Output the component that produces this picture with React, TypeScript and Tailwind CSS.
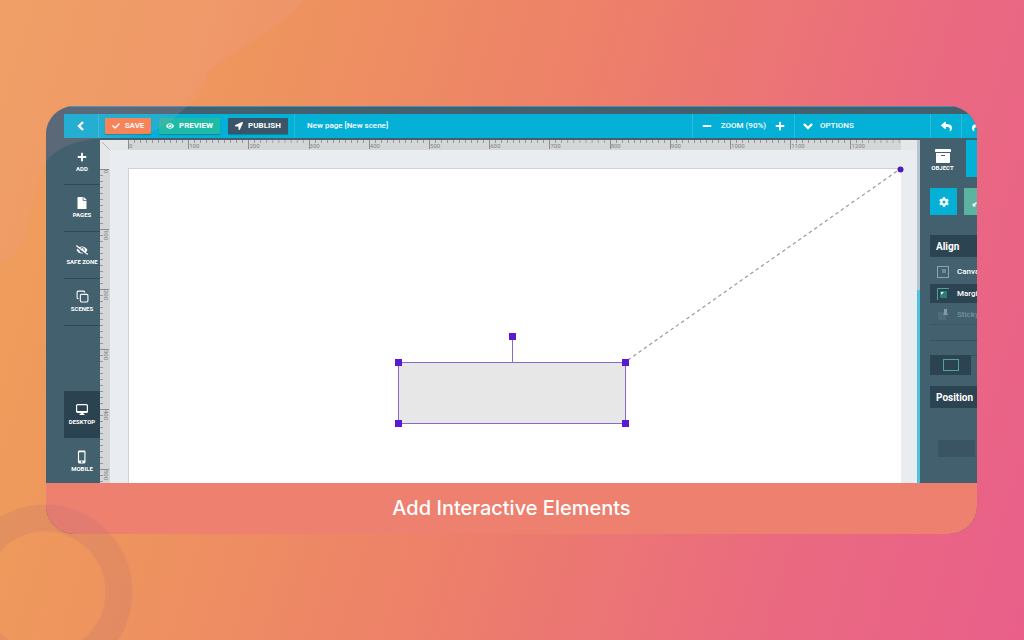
import type { ReactNode } from "react";
import { Copy } from "lucide-react";
import {
  FaArchive,
  FaCheck,
  FaCog,
  FaExpandAlt,
  FaEye,
  FaEyeSlash,
  FaFile,
  FaLocationArrow,
  FaMinus,
  FaPlus,
  FaReply,
  FaShare,
} from "react-icons/fa";
import { MdPhoneIphone } from "react-icons/md";
import clsx from "clsx";

const topMarks = [0, 100, 200, 300, 400, 500, 600, 700, 800, 900, 1000, 1100, 1200];
const sideMarks = [0, 100, 200, 300, 400, 500];

const tools = [
  { label: "ADD", icon: <FaPlus className="size-[10px]" /> },
  { label: "PAGES", icon: <FaFile className="size-3" /> },
  { label: "SAFE ZONE", icon: <FaEyeSlash className="size-3" /> },
  { label: "SCENES", icon: <Copy className="size-[13px]" strokeWidth={2} /> },
];

const Backdrop = () => (
  <svg
    className="pointer-events-none absolute inset-0 h-full w-full"
    aria-hidden="true"
  >
    <path
      d="M0 0H303C290 20 250 40 207 72C204 90 196 98 185 108C170 122 160 136 110 138C85 138 62 144 47 160C32 190 32 222 22 244C16 256 8 260 0 262Z"
      fill="#f4a0b8"
      fillOpacity="0.13"
    />
    <circle cx="45" cy="592" r="74" fill="none" stroke="#a8607a" strokeOpacity="0.15" strokeWidth="27" />
  </svg>
);

const Chevron = ({ d }: { d: string }) => (
  <svg className="size-[10px]" viewBox="0 0 10 10" fill="none" stroke="currentColor" strokeWidth="2.4" aria-hidden="true">
    <path d={d} />
  </svg>
);

const MonitorIcon = () => (
  <svg className="size-3" viewBox="0 0 12 12" fill="none" aria-hidden="true">
    <rect x="0.6" y="0.6" width="10.8" height="7.8" rx="1" stroke="white" strokeWidth="1.2" />
    <path d="M1 7H11V8.6H1ZM4.5 9H7.5V10H8.5V11H3.5V10H4.5Z" fill="white" />
  </svg>
);

const Divider = () => <span className="w-px self-stretch bg-white/15" />;

const ToolButton = ({
  label,
  icon,
  className,
}: {
  label: string;
  icon: ReactNode;
  className?: string;
}) => (
  <button
    className={clsx(
      "flex flex-col items-center justify-center gap-[2px] text-[6px] leading-[7px] font-bold whitespace-nowrap text-white",
      className
    )}
  >
    <span className="flex h-3 items-center">{icon}</span>
    {label}
  </button>
);

const ActionButton = ({
  label,
  icon,
  className,
}: {
  label: string;
  icon: ReactNode;
  className: string;
}) => (
  <button
    className={clsx(
      "flex h-4 items-center justify-center gap-[5px] rounded-[1px] text-[8px] leading-none font-bold shadow-[0_1px_1px_#00000040]",
      className
    )}
  >
    {icon}
    {label}
  </button>
);

const Toolbar = () => (
  <header className="ml-[18px] flex h-6 items-center overflow-hidden bg-[#04b0d6] text-[8px] leading-none font-medium whitespace-nowrap text-white">
    <button className="flex h-full w-[34px] shrink-0 items-center justify-center" aria-label="Back">
      <Chevron d="M7 1L3 5L7 9" />
    </button>
    <Divider />
    <div className="flex shrink-0 gap-2 px-[6px]">
      <ActionButton label="SAVE" icon={<FaCheck className="size-2" />} className="w-[46px] bg-[#f5804a]" />
      <ActionButton label="PREVIEW" icon={<FaEye className="size-2" />} className="w-[61px] bg-[#1fbba6]" />
      <ActionButton label="PUBLISH" icon={<FaLocationArrow className="size-2" />} className="w-[60px] bg-[#3a5568]" />
    </div>
    <Divider />
    <span className="grow pl-3">New page [New scene]</span>
    <Divider />
    <div className="flex w-[101px] shrink-0 items-center justify-between px-[9px]">
      <button aria-label="Zoom out">
        <FaMinus className="size-[10px]" />
      </button>
      <span>ZOOM (90%)</span>
      <button aria-label="Zoom in">
        <FaPlus className="size-[10px]" />
      </button>
    </div>
    <Divider />
    <button className="flex w-[135px] shrink-0 items-center gap-[7px] pl-2">
      <Chevron d="M1 3L5 7L9 3" />
      OPTIONS
    </button>
    <Divider />
    <button className="flex w-[30px] shrink-0 justify-center" aria-label="Undo">
      <FaReply className="size-[11px]" />
    </button>
    <Divider />
    <button className="flex w-[15px] shrink-0 pl-[10px]" aria-label="Redo">
      <FaShare className="size-[11px] shrink-0" />
    </button>
  </header>
);

const Sidebar = () => (
  <nav className="flex w-[54px] shrink-0 flex-col pl-[18px]" aria-label="Tools">
    {tools.map((tool) => (
      <ToolButton
        key={tool.label}
        label={tool.label}
        icon={tool.icon}
        className={clsx("border-b border-[#2f4a59] pb-[2px]", tool.label === "ADD" ? "h-[45px]" : "h-[47px]")}
      />
    ))}
    <div className="mt-auto flex flex-col">
      <ToolButton label="DESKTOP" icon={<MonitorIcon />} className="h-[47px] bg-[#2b4351]" />
      <ToolButton label="MOBILE" icon={<MdPhoneIphone className="size-[14px]" />} className="h-[45px] pt-[2px]" />
    </div>
  </nav>
);

const TopRuler = () => (
  <div className="flex h-[10px] bg-[#e6e7e9] pr-4">
    <div className="w-7 shrink-0">
      <svg className="h-[10px] w-[10px]" viewBox="0 0 10 10" aria-hidden="true">
        <path d="M2 2L10 10" stroke="#a5a8ab" strokeWidth="0.8" />
      </svg>
    </div>
    <div className="flex grow overflow-hidden bg-[#d5d6d7]">
      {topMarks.map((mark) => (
        <div
          key={mark}
          className="w-[7.79%] shrink-0 bg-[linear-gradient(90deg,#96999b_1px,transparent_1px)] bg-[length:10%_3px] bg-repeat-x"
        >
          <div className="h-[9px] border-l border-[#8b8e90] pt-[3px] text-[6px] leading-[6px] text-[#808385]">
            {mark}
          </div>
        </div>
      ))}
    </div>
  </div>
);

const SideRuler = () => (
  <div className="relative w-[10px] shrink-0 bg-[#e6e7e9]">
    <div className="absolute inset-x-0 top-[19px] bottom-0 overflow-hidden bg-[#d5d6d7]">
      {sideMarks.map((mark) => (
        <div
          key={mark}
          className="h-[60px] bg-[linear-gradient(180deg,#96999b_1px,transparent_1px)] bg-[length:3px_10%] bg-repeat-y"
        >
          <div className="w-[9px] border-t border-[#8b8e90] pl-[3px] text-[6px] leading-[6px] text-[#808385] [writing-mode:vertical-rl]">
            {mark}
          </div>
        </div>
      ))}
    </div>
  </div>
);

const handles = [
  [270, 194],
  [497, 194],
  [270, 255],
  [497, 255],
  [384, 168],
];

const Artboard = () => (
  <svg
    className="block h-auto w-full overflow-visible border-t border-l border-[#d0d2d5] bg-white"
    viewBox="1 1 772 314"
    role="img"
    aria-label="Scene with a selected rectangle"
  >
    <path d="M500 192L772 1" stroke="#9a9a9a" strokeWidth="1.2" strokeDasharray="3.5 3" />
    <rect x="270.5" y="194.5" width="227" height="61" fill="#e7e7e7" stroke="#8a68c8" />
    <path d="M384.5 168V194" stroke="#8a68c8" />
    {handles.map(([x, y]) => (
      <rect key={`${x}-${y}`} x={x - 3} y={y - 3} width="7" height="7" fill="#5a1ad2" />
    ))}
    <circle cx="772.5" cy="1.5" r="3" fill="#4d1bb8" />
  </svg>
);

const Workspace = () => (
  <main className="flex min-w-0 grow flex-col bg-[#e9ecf1]">
    <TopRuler />
    <div className="flex grow">
      <SideRuler />
      <div className="grow overflow-hidden pt-[18px] pr-4 pl-[18px]">
        <Artboard />
      </div>
    </div>
  </main>
);

const PanelHeading = ({ children }: { children: ReactNode }) => (
  <h2 className="flex h-[22px] items-center bg-[#2c4351] pl-[6px] text-[10px] font-bold">{children}</h2>
);

const ObjectPanel = () => (
  <aside className="w-[57px] shrink-0 overflow-hidden whitespace-nowrap text-white">
    <div className="flex h-[37px]">
      <ToolButton label="OBJECT" icon={<FaArchive className="size-4" />} className="w-[45px] shrink-0 pt-1" />
      <div className="-mt-[2px] ml-px grow bg-[#04b0d6]" />
    </div>
    <div className="mt-[11px] flex gap-[7px] pl-[10px]">
      <button className="flex size-[27px] shrink-0 items-center justify-center bg-[#04b0d6]" aria-label="Settings">
        <FaCog className="size-[10px]" />
      </button>
      <button className="flex size-[27px] shrink-0 items-center bg-[#5bb3a0] pl-2" aria-label="Resize">
        <FaExpandAlt className="size-[10px]" />
      </button>
    </div>
    <section className="mt-5 pl-[10px] text-[8px] font-medium">
      <PanelHeading>Align</PanelHeading>
      <button className="mt-[5px] flex h-[19px] w-full items-center gap-2 pl-[7px]">
        <svg className="size-3 shrink-0" viewBox="0 0 12 12" fill="none" aria-hidden="true">
          <rect x="0.5" y="0.5" width="11" height="11" stroke="#8fa3ad" />
          <path d="M5 3H9V7H5Z" fill="#718995" />
        </svg>
        Canvas
      </button>
      <button className="mt-[3px] flex h-[19px] w-full items-center gap-2 bg-[#2c4351] pl-[7px]">
        <svg className="size-3 shrink-0" viewBox="0 0 12 12" fill="none" aria-hidden="true">
          <path d="M0.5 12V0.5H12" stroke="#4aa795" />
          <path d="M3 3H10V10H3Z" fill="#2f7c74" />
          <path d="M4 4H7L4 7Z" fill="#e8f5f2" />
        </svg>
        Margins
      </button>
      <button className="mt-[3px] flex h-[19px] w-full items-center gap-2 border-b border-[#3a5665] pl-[7px] text-[#78909c]">
        <svg className="size-3 shrink-0" viewBox="0 0 12 12" fill="none" aria-hidden="true">
          <path d="M1 3H9V11H1Z" fill="#506a78" />
          <path d="M7 0H10V4L11 6H6L7 4Z" fill="#8398a3" />
        </svg>
        Sticky
      </button>
      <hr className="mt-[15px] border-[#365160]" />
      <div className="mt-[14px] flex">
        <button className="flex h-5 w-[41px] shrink-0 items-center justify-center bg-[#2c4351]" aria-label="Border">
          <span className="h-3 w-4 border border-[#4aa795]" />
        </button>
        <span className="h-5 grow border-t border-[#36505f]" />
      </div>
    </section>
    <section className="mt-[11px] pl-[10px]">
      <PanelHeading>Position</PanelHeading>
      <input
        className="mt-8 ml-2 block h-[17px] w-[37px] bg-[#3a5464] px-1 text-[8px]"
        aria-label="Position"
      />
    </section>
  </aside>
);

export default function App() {
  return (
    <div className="relative min-h-screen overflow-hidden bg-[linear-gradient(107deg,#efa05a_0%,#ee955e_22%,#ed8069_50%,#ea6a80_78%,#e95f8a_100%)] pt-[106px] pr-[47px] pb-[106px] pl-[46px] font-['Roboto','Liberation_Sans',sans-serif]">
      <div className="overflow-hidden rounded-[28px] bg-[#43606f]">
        <div className="border-t border-[#3f94b8] pt-[7px]">
          <Toolbar />
        </div>
        <div className="mt-[2px] flex">
          <Sidebar />
          <Workspace />
          <div className="flex w-[3px] shrink-0 flex-col bg-[#b4c5cd] pt-[150px]">
            <div className="grow bg-[#4fc2de]" />
          </div>
          <ObjectPanel />
        </div>
        <p className="bg-[#ed806f] text-center font-['Inter','Liberation_Sans',sans-serif] text-[20px] leading-[51px] font-medium text-white">
          Add Interactive Elements
        </p>
      </div>
      <Backdrop />
    </div>
  );
}
